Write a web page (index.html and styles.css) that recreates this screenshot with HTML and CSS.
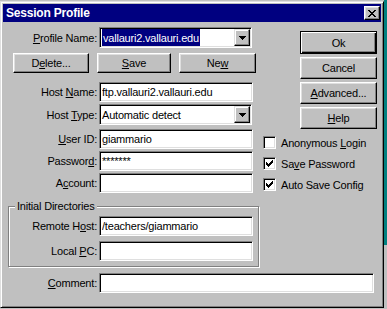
FILE: index.html
```html
<!DOCTYPE html>
<html lang="en">
<head>
    <meta charset="UTF-8">
    <meta name="viewport" content="width=device-width, initial-scale=1.0">
    <title>Session Profile</title>
    <link rel="stylesheet" href="styles.css">
</head>
<body>
<div class="desk">
    <div class="dialog">
        <!-- Titelleiste -->
        <div class="titlebar">
            <span class="title">Session Profile</span>
            <span class="closebtn">
                <svg width="8" height="7" viewBox="0 0 8 7" shape-rendering="crispEdges">
                    <path d="M0 0h2v1H0zM6 0h2v1H6zM1 1h2v1H1zM5 1h2v1H5zM2 2h4v1H2zM3 3h2v1H3zM2 4h4v1H2zM1 5h2v1H1zM5 5h2v1H5zM0 6h2v1H0zM6 6h2v1H6z" fill="#000"/>
                </svg>
            </span>
        </div>

        <div class="main">
            <div class="leftcol">
                <div class="row first">
                    <label class="lbl"><u>P</u>rofile Name:</label>
                    <div class="combo">
                        <span class="value"><span class="sel">vallauri2.vallauri.edu</span></span>
                        <span class="arrow">
                            <svg width="7" height="4" viewBox="0 0 7 4" shape-rendering="crispEdges">
                                <path d="M0 0h7v1H0zM1 1h5v1H1zM2 2h3v1H2zM3 3h1v1H3z" fill="#000"/>
                            </svg>
                        </span>
                    </div>
                </div>

                <div class="btnrow">
                    <button class="btn w-delete">D<u>e</u>lete...</button>
                    <button class="btn w-save"><u>S</u>ave</button>
                    <button class="btn w-new">Ne<u>w</u></button>
                </div>

                <div class="row hostname">
                    <label class="lbl">Host <u>N</u>ame:</label>
                    <input class="field" type="text" value="ftp.vallauri2.vallauri.edu">
                </div>
                <div class="row hosttype">
                    <label class="lbl">Host <u>T</u>ype:</label>
                    <div class="combo">
                        <span class="value">Automatic detect</span>
                        <span class="arrow">
                            <svg width="7" height="4" viewBox="0 0 7 4" shape-rendering="crispEdges">
                                <path d="M0 0h7v1H0zM1 1h5v1H1zM2 2h3v1H2zM3 3h1v1H3z" fill="#000"/>
                            </svg>
                        </span>
                    </div>
                </div>
                <div class="row userid">
                    <label class="lbl"><u>U</u>ser ID:</label>
                    <input class="field" type="text" value="giammario">
                </div>
                <div class="row pass">
                    <label class="lbl">Passwor<u>d</u>:</label>
                    <input class="field" type="text" value="*******">
                </div>
                <div class="row pass">
                    <label class="lbl">A<u>c</u>count:</label>
                    <input class="field" type="text" value="">
                </div>

                <!-- Verzeichnisse -->
                <fieldset class="group">
                    <legend>Initial Directories</legend>
                    <div class="row remote">
                        <label class="lbl small">Remote H<u>o</u>st:</label>
                        <input class="field" type="text" value="/teachers/giammario">
                    </div>
                    <div class="row local">
                        <label class="lbl small">Local <u>P</u>C:</label>
                        <input class="field" type="text" value="">
                    </div>
                </fieldset>
            </div>

            <div class="rightcol">
                <button class="btn side default">Ok</button>
                <button class="btn side">Cancel</button>
                <button class="btn side"><u>A</u>dvanced...</button>
                <button class="btn side"><u>H</u>elp</button>

                <div class="checks">
                    <div class="check">
                        <span class="box"></span>
                        <span>Anonymous <u>L</u>ogin</span>
                    </div>
                    <div class="check">
                        <span class="box">
                            <svg width="7" height="7" viewBox="0 0 7 7" shape-rendering="crispEdges">
                                <path d="M6 0h1v1H6zM5 1h2v1H5zM0 2h1v1H0zM4 2h3v1H4zM0 3h2v1H0zM3 3h3v1H3zM0 4h5v1H0zM1 5h3v1H1zM2 6h1v1H2z" fill="#000"/>
                            </svg>
                        </span>
                        <span>Sa<u>v</u>e Password</span>
                    </div>
                    <div class="check">
                        <span class="box">
                            <svg width="7" height="7" viewBox="0 0 7 7" shape-rendering="crispEdges">
                                <path d="M6 0h1v1H6zM5 1h2v1H5zM0 2h1v1H0zM4 2h3v1H4zM0 3h2v1H0zM3 3h3v1H3zM0 4h5v1H0zM1 5h3v1H1zM2 6h1v1H2z" fill="#000"/>
                            </svg>
                        </span>
                        <span>Auto Save Config</span>
                    </div>
                </div>
            </div>
        </div>

        <div class="row comment">
            <label class="lbl"><u>C</u>omment:</label>
            <input class="field wide" type="text" value="">
        </div>
    </div>
    <div class="edge"></div>
</div>
</body>
</html>
```

FILE: styles.css
```css
body {
    margin: 0;
    background-color: #c0c0c0;
    font-family: "Liberation Sans", Arial, sans-serif;
    font-size: 11px;
    letter-spacing: -0.2px;
    color: #000;
}
u {
    text-decoration: underline;
    text-underline-offset: 1px;
}
.desk {
    display: flex;
    height: 309px;
}
.dialog {
    width: 384px;
    height: 307px;
    box-sizing: border-box;
    margin-top: 1px;
    border: 1px solid;
    border-color: #dfdfdf #000 #000 #dfdfdf;
    box-shadow: inset 1px 1px #fff, inset -1px -1px #808080;
    padding: 2px;
    background-color: #c0c0c0;
}
.edge {
    flex: 1;
    background: linear-gradient(#008080 0 245px, #c0c0c0 245px);
}
.titlebar {
    height: 18px;
    background-color: #000080;
    display: flex;
    align-items: center;
    justify-content: space-between;
    padding-left: 3px;
}
.title {
    color: #fff;
    font-weight: bold;
    font-size: 12px;
    letter-spacing: -0.2px;
}
.closebtn {
    width: 16px;
    height: 14px;
    box-sizing: border-box;
    margin-right: 1px;
    border: 1px solid;
    border-color: #fff #000 #000 #fff;
    box-shadow: inset -1px -1px #808080, inset 1px 1px #dfdfdf;
    background-color: #c0c0c0;
    display: flex;
    align-items: center;
    justify-content: center;
}
.main {
    display: flex;
}
.leftcol {
    width: 257px;
    flex-shrink: 0;
}
.row {
    display: flex;
    align-items: center;
    gap: 2px;
}
.lbl {
    width: 94px;
    text-align: right;
    white-space: nowrap;
}
.lbl.small {
    width: 88px;
}
.row.first {
    margin-top: 5px;
}
.row.hostname {
    margin-top: 9px;
}
.row.hosttype {
    margin-top: 2px;
}
.row.userid {
    margin-top: 4px;
}
.row.pass {
    margin-top: 2px;
}
.field {
    width: 154px;
    height: 20px;
    box-sizing: border-box;
    margin: 0;
    padding: 0 2px;
    border: 1px solid;
    border-color: #808080 #fff #fff #808080;
    box-shadow: inset 1px 1px #000, inset -1px -1px #dfdfdf;
    background-color: #fff;
    font: inherit;
    letter-spacing: inherit;
    color: #000;
    outline: none;
}
.field.wide {
    width: 275px;
}
.combo {
    width: 153px;
    height: 21px;
    box-sizing: border-box;
    border: 1px solid;
    border-color: #808080 #fff #fff #808080;
    box-shadow: inset 1px 1px #000, inset -1px -1px #dfdfdf;
    background-color: #fff;
    padding: 1px;
    display: flex;
}
.combo .value {
    flex: 1;
    display: flex;
    align-items: center;
    padding-left: 1px;
}
.combo .sel {
    background-color: #000080;
    color: #fff;
    align-self: stretch;
    display: flex;
    align-items: center;
    padding: 0 1px;
}
.combo .arrow {
    width: 16px;
    box-sizing: border-box;
    border: 1px solid;
    border-color: #dfdfdf #000 #000 #dfdfdf;
    box-shadow: inset -1px -1px #808080, inset 1px 1px #fff;
    background-color: #c0c0c0;
    display: flex;
    align-items: center;
    justify-content: center;
}
.btnrow {
    display: flex;
    gap: 8px;
    padding-left: 10px;
    margin-top: 5px;
}
.btn {
    height: 20px;
    box-sizing: border-box;
    margin: 0;
    padding: 0;
    border: 1px solid;
    border-color: #fff #000 #000 #fff;
    box-shadow: inset -1px -1px #808080, inset 1px 1px #dfdfdf;
    background-color: #c0c0c0;
    font: inherit;
    letter-spacing: inherit;
    color: #000;
}
.w-delete {
    width: 76px;
}
.w-save {
    width: 74px;
}
.w-new {
    width: 77px;
}
.group {
    width: 251px;
    box-sizing: border-box;
    min-width: 0;
    margin: 7px 0 0 5px;
    padding: 0 5px 5px 0;
    border: 1px solid #808080;
    box-shadow: 1px 1px #fff, inset 1px 1px #fff;
}
.group legend {
    margin-left: 6px;
    padding: 0 2px;
    line-height: 13px;
    background-color: #c0c0c0;
}
.row.remote {
    margin-top: 3px;
}
.row.local {
    margin-top: 5px;
}
.rightcol {
    display: flex;
    flex-direction: column;
}
.btn.side {
    width: 77px;
    height: 22px;
    margin-left: 40px;
    margin-top: 3px;
}
.btn.default {
    height: 23px;
    margin-top: 9px;
    border-color: #000;
    box-shadow: inset 1px 1px #fff, inset -1px -1px #000, inset -2px -2px #808080;
}
.checks {
    margin-top: 3px;
    margin-left: 3px;
}
.check {
    height: 21px;
    display: flex;
    align-items: center;
    gap: 5px;
    white-space: nowrap;
}
.box {
    width: 13px;
    height: 13px;
    box-sizing: border-box;
    border: 1px solid;
    border-color: #808080 #fff #fff #808080;
    box-shadow: inset 1px 1px #000, inset -1px -1px #dfdfdf;
    background-color: #fff;
    display: flex;
    align-items: center;
    justify-content: center;
}
.row.comment {
    margin-top: 6px;
}
```
